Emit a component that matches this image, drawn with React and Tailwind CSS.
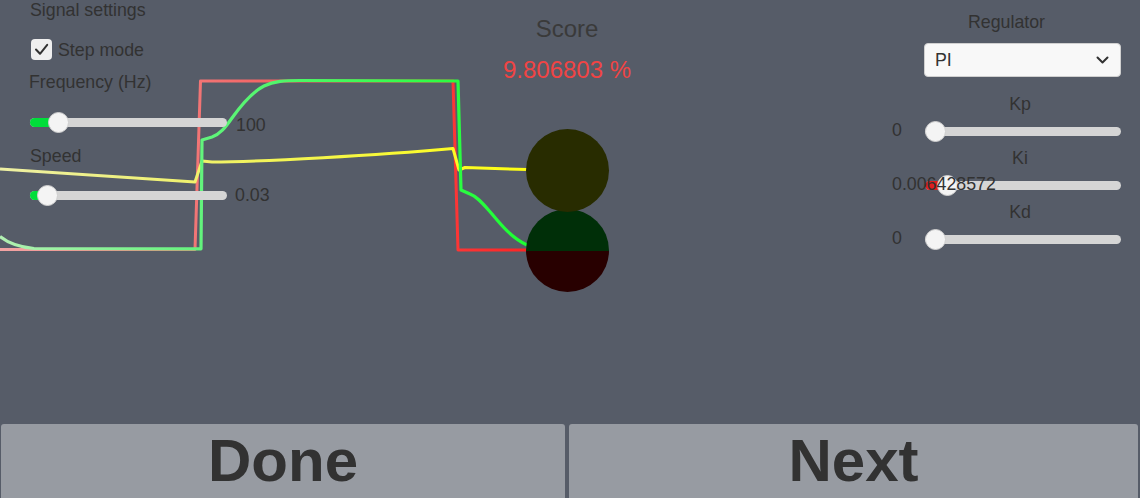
import React from 'react';

// Track with a round knob; knob/fill are pixel offsets from the track's left edge
const Slider = ({ width, knob, fill, fillColor }) => {
  return (
    <div className="relative h-[21px]" style={{ width }}>
      <div className="absolute left-0 right-0 top-[6px] h-[9px] rounded-full bg-[#d5d5d5]" />
      {fill ? (
        <div className={`absolute left-0 top-[6px] h-[9px] rounded-l-full ${fillColor}`} style={{ width: fill }} />
      ) : null}
      <div
        className="absolute top-0 w-[21px] h-[21px] rounded-full bg-[#f4f4f4] border border-[#cfcfcf]"
        style={{ left: knob - 10.5 }}
      />
    </div>
  );
};

const ParamRow = ({ label, value, knob, fill }) => {
  return (
    <>
      <div className="mt-[6px] ml-[33px] pr-[6px] text-center leading-[20px]">{label}</div>
      <div className="mt-[6px] flex h-[22px]">
        <div className="relative w-[33px] z-20">
          <span className="absolute left-0 top-0 leading-[20px] whitespace-nowrap">{value}</span>
        </div>
        <div className="pt-px">
          <Slider width={196} knob={knob} fill={fill} fillColor="bg-[#e01e1e]" />
        </div>
      </div>
    </>
  );
};

const Chart = () => {
  return (
    <svg className="absolute left-0 top-0 pointer-events-none" width="1140" height="424" viewBox="0 0 1140 424" fill="none">
      <defs>
        <linearGradient id="red" gradientUnits="userSpaceOnUse" x1="0" y1="0" x2="527" y2="0">
          <stop offset="0" stopColor="#f2a4a4" />
          <stop offset="0.4" stopColor="#f27272" />
          <stop offset="1" stopColor="#ff2424" />
        </linearGradient>
        <linearGradient id="green" gradientUnits="userSpaceOnUse" x1="0" y1="0" x2="527" y2="0">
          <stop offset="0" stopColor="#b2f0b2" />
          <stop offset="0.4" stopColor="#5ff47a" />
          <stop offset="1" stopColor="#1cff32" />
        </linearGradient>
        <linearGradient id="yellow" gradientUnits="userSpaceOnUse" x1="0" y1="0" x2="527" y2="0">
          <stop offset="0" stopColor="#eef0a4" />
          <stop offset="0.4" stopColor="#f0f268" />
          <stop offset="1" stopColor="#ffff10" />
        </linearGradient>
      </defs>
      <path d="M0 249.5 L195 249.5 L200.5 81 L453 81 L458 250 L527 250" stroke="url(#red)" strokeWidth="3" strokeLinejoin="round" />
      <path
        d="M0 169 L195 182 L202 161 L212 162 C260 162 380 155 453 148.5 L459 170 L465 167.5 L527 169.5"
        stroke="url(#yellow)"
        strokeWidth="3"
        strokeLinejoin="round"
      />
      <path
        d="M0 236.5 C8 243 18 247 34 248.5 L201 248.8 L202 140 L212 137 C220 134 225 128 232 118 C242 104 252 92 264 86 C274 81 285 80.5 300 80.5 L458 81 L461 190 L470 194 C478 197 484 205 492 214 C502 226 512 238 527 245"
        stroke="url(#green)"
        strokeWidth="3.2"
        strokeLinejoin="round"
      />
    </svg>
  );
};

export default function App() {
  return (
    <div className="relative w-[1140px] h-[498px] overflow-hidden bg-[#565c68] text-[#323232] font-['Liberation_Sans',Arial,sans-serif] text-[17.8px] flex flex-col">
      <Chart />

      <div className="relative z-10 h-[424px] shrink-0 flex">
        {/* Signal settings */}
        <div className="w-[300px] pl-[30px]">
          <div className="leading-[20px]">Signal settings</div>
          <div className="mt-[19px] flex items-center h-[21px]">
            <div className="w-[21px] h-[21px] ml-px rounded-[4px] bg-[#efefef] flex items-center justify-center">
              <svg width="15" height="15" viewBox="0 0 15 15" fill="none">
                <path d="M2 7.5 L6 11.8 L13.2 2.8" stroke="#323232" strokeWidth="2" strokeLinecap="round" strokeLinejoin="round" />
              </svg>
            </div>
            <span className="ml-[6px] leading-[20px]">Step mode</span>
          </div>
          <div className="mt-[12px] -ml-px leading-[20px]">Frequency (Hz)</div>
          <div className="mt-[20px] flex items-start">
            <Slider width={197} knob={28.5} fill={28} fillColor="bg-[#00de3a]" />
            <span className="ml-[9px] mt-[3px] leading-[20px]">100</span>
          </div>
          <div className="mt-[11px] leading-[20px]">Speed</div>
          <div className="mt-[19px] flex items-start">
            <Slider width={197} knob={17} fill={17} fillColor="bg-[#00de3a]" />
            <span className="ml-[8px] leading-[20px]">0.03</span>
          </div>
        </div>

        {/* Score */}
        <div className="flex-1 flex flex-col items-center pt-[15px]">
          <div className="text-[24px] leading-[28px] text-[#3a3a3a]">Score</div>
          <div className="mt-[13px] text-[24px] leading-[28px] text-[#f04444]">9.806803 %</div>
          <div className="mt-[45px] flex flex-col items-center">
            <div className="relative z-10 w-[83px] h-[83px] rounded-full bg-[#282c00]" />
            <div className="-mt-[3px] w-[83px] h-[83px] rounded-full overflow-hidden flex flex-col">
              <div className="h-1/2 bg-[#002f08]" />
              <div className="h-1/2 bg-[#280000]" />
            </div>
          </div>
        </div>

        {/* Regulator */}
        <div className="w-[306px]">
          <div className="ml-[58px] w-[229px] pt-[12px] flex flex-col">
            <div className="text-center leading-[20px]">Regulator</div>
            <div className="mt-[11px] mb-[11px] ml-[32px] w-[197px] h-[34px] rounded-[4px] bg-[#f8f8f8] border border-[#d0d0d0] flex items-center justify-between pl-[10px] pr-[11px]">
              <span className="leading-[20px]">PI</span>
              <svg width="13" height="8" viewBox="0 0 13 8" fill="none">
                <path d="M1.5 1.5 L6.5 6.5 L11.5 1.5" stroke="#323232" strokeWidth="2" strokeLinecap="round" strokeLinejoin="round" />
              </svg>
            </div>
            <ParamRow label="Kp" value="0" knob={10.5} />
            <ParamRow label="Ki" value="0.006428572" knob={22} fill={22} />
            <ParamRow label="Kd" value="0" knob={10.5} />
          </div>
        </div>
      </div>

      {/* Bottom buttons */}
      <div className="relative z-10 flex gap-[4px] pl-px pr-[2px] h-[90px] shrink-0">
        <button className="w-[564px] rounded-t-[3px] bg-[#979ba2] pt-[7px] text-[60px] leading-[60px] font-bold text-[#323232] text-center self-stretch flex justify-center">
          Done
        </button>
        <button className="flex-1 rounded-t-[3px] bg-[#979ba2] pt-[7px] text-[60px] leading-[60px] font-bold text-[#323232] text-center self-stretch flex justify-center">
          Next
        </button>
      </div>
    </div>
  );
}
